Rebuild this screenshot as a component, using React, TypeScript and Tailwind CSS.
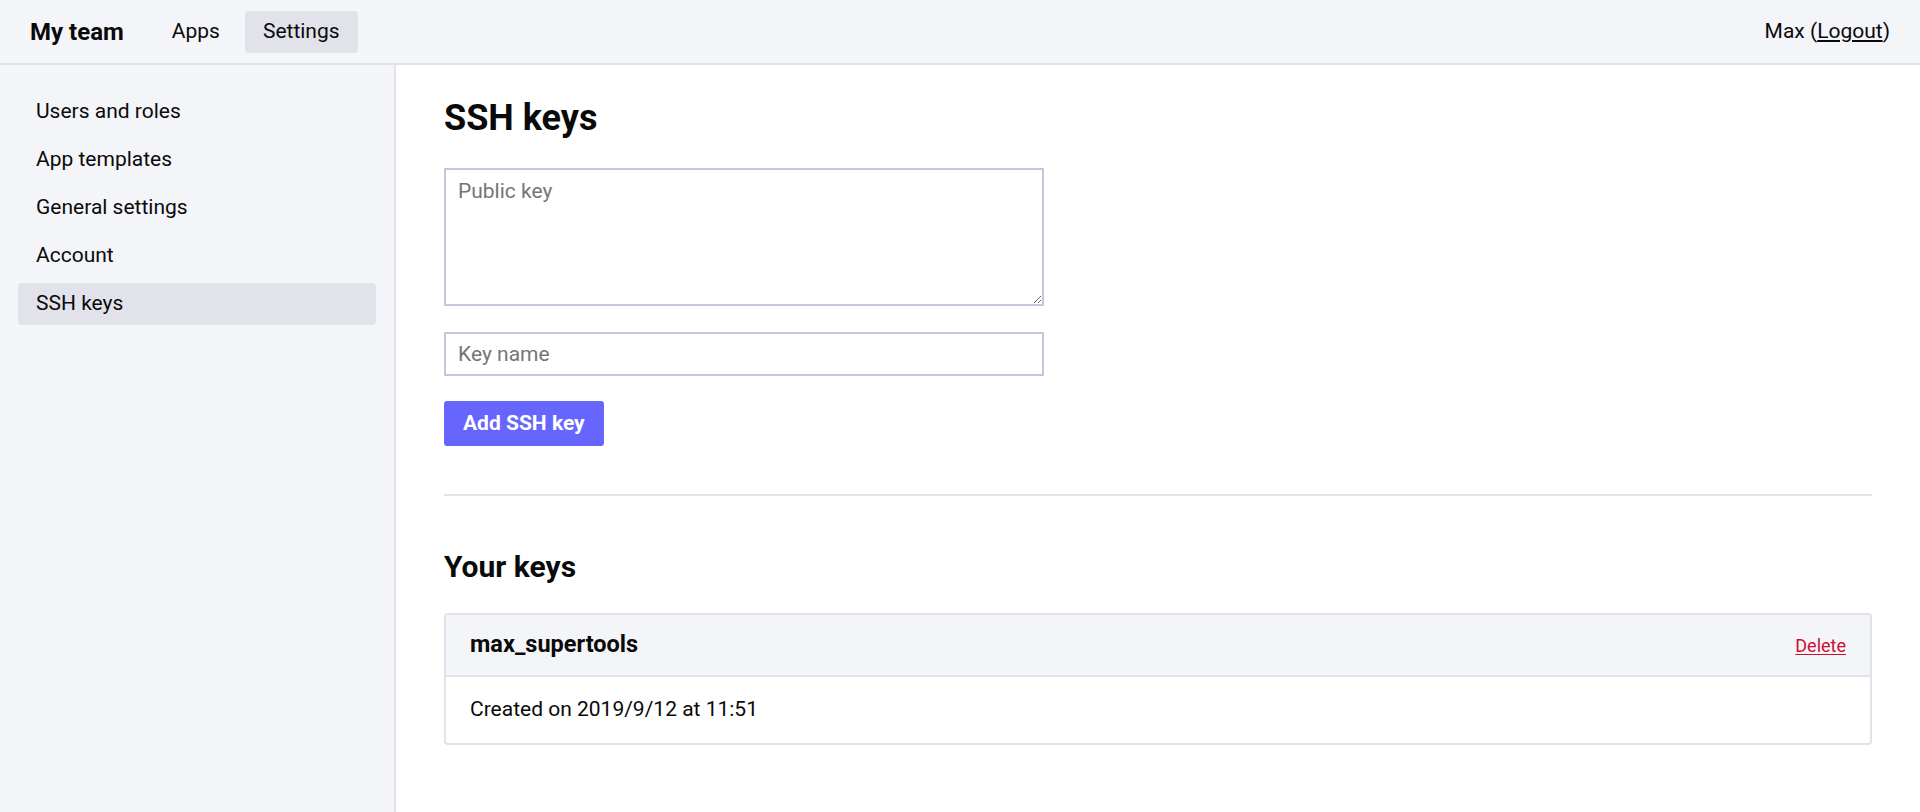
const sideItems = ["Users and roles", "App templates", "General settings", "Account", "SSH keys"];

const Header = () => (
  <header className="flex h-[65px] shrink-0 items-center justify-between border-b-[2px] border-[#e2e3ea] bg-[#f4f5f9] px-[30px]">
    <div className="flex items-center">
      <span className="text-[24px] font-bold">My team</span>
      <nav className="ml-[30px] flex items-center gap-[7px] text-[21px]">
        <a href="#" className="flex h-[42px] items-center rounded-[4px] px-[18px]">
          Apps
        </a>
        <a href="#" className="flex h-[42px] items-center rounded-[4px] bg-[#e1e2ea] px-[18px]">
          Settings
        </a>
      </nav>
    </div>
    <div className="text-[21px]">
      Max (<a href="#" className="underline underline-offset-2">Logout</a>)
    </div>
  </header>
);

const Sidebar = () => (
  <aside className="flex w-[396px] shrink-0 flex-col gap-[6px] border-r-[2px] border-[#e2e3ea] bg-[#f4f5f9] px-[18px] pt-[26px]">
    {sideItems.map((item) => (
      <a
        key={item}
        href="#"
        className={
          item === "SSH keys"
            ? "flex h-[42px] items-center rounded-[4px] bg-[#e1e2ea] px-[18px] text-[21px]"
            : "flex h-[42px] items-center rounded-[4px] px-[18px] text-[21px]"
        }
      >
        {item}
      </a>
    ))}
  </aside>
);

const KeyCard = ({ name, created }: { name: string; created: string }) => (
  <div className="overflow-hidden rounded-[4px] border-[2px] border-[#e2e3ea]">
    <div className="flex h-[62px] items-center justify-between border-b-[2px] border-[#e2e3ea] bg-[#f4f5f9] px-[24px]">
      <span className="text-[23.5px] font-bold">{name}</span>
      <a href="#" className="text-[18px] text-[#cc0f35] underline underline-offset-2">
        Delete
      </a>
    </div>
    <div className="flex h-[66px] items-center px-[24px] text-[21px]">{created}</div>
  </div>
);

export default function App() {
  return (
    <div className="flex h-screen min-h-[812px] flex-col bg-white font-['Roboto',sans-serif] text-[#0a0a0a]">
      <Header />
      <div className="flex flex-1">
        <Sidebar />
        <main className="flex-1 px-[48px] pt-[33px]">
          <h1 className="text-[36px] font-bold leading-[40px]">SSH keys</h1>
          <form className="mt-[30px] flex flex-col items-start">
            <textarea
              placeholder="Public key"
              className="h-[138px] w-[600px] border-[2px] border-[#c5c6da] px-[12px] py-[6px] text-[21px] outline-none placeholder:text-[#767676]"
            />
            <input
              placeholder="Key name"
              className="mt-[26px] h-[44px] w-[600px] border-[2px] border-[#c5c6da] px-[12px] text-[21px] outline-none placeholder:text-[#767676]"
            />
            <button
              type="button"
              className="mt-[25px] h-[45px] rounded-[3px] bg-[#6666ff] px-[19px] text-[21px] font-bold text-white"
            >
              Add SSH key
            </button>
          </form>
          <hr className="mt-[48px] border-t-[2px] border-[#e2e3ea]" />
          <h2 className="mt-[53px] text-[30px] font-bold leading-[36px]">Your keys</h2>
          <div className="mt-[28px]">
            <KeyCard name="max_supertools" created="Created on 2019/9/12 at 11:51" />
          </div>
        </main>
      </div>
    </div>
  );
}
